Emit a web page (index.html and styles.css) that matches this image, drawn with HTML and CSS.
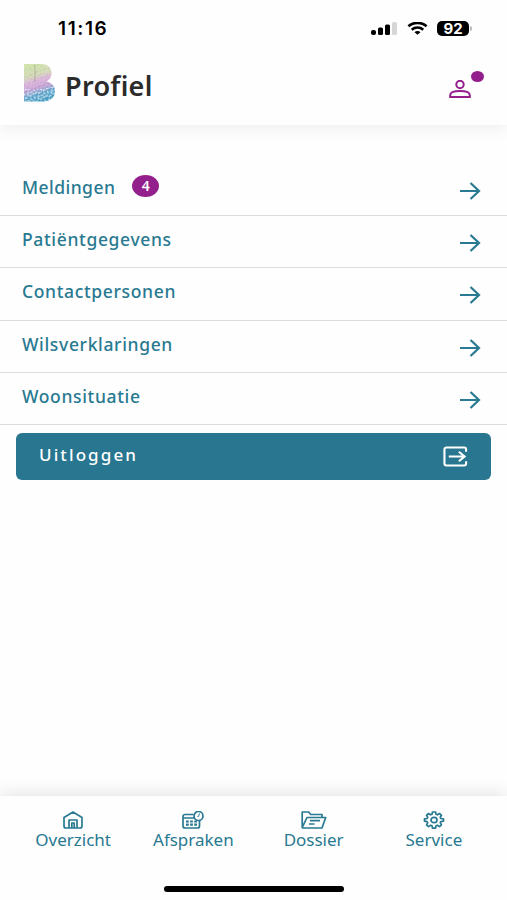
FILE: index.html
```html
<!DOCTYPE html>
<html lang="nl">
<head>
  <meta charset="UTF-8">
  <meta name="viewport" content="width=device-width, initial-scale=1">
  <title>Profiel</title>
  <link rel="stylesheet" href="styles.css">
</head>
<body>
  <div class="statusbar">
    <span class="tijd">11:16</span>
    <div class="status-iconen">
      <svg width="26" height="14" viewBox="0 0 26 14">
        <rect x="0" y="9" width="5" height="5" rx="2"/>
        <rect x="7" y="6.5" width="5" height="7.5" rx="1.5"/>
        <rect x="14" y="3.5" width="5" height="10.5" rx="1.5"/>
        <rect x="21" y="1" width="5" height="13" rx="1.5" fill="#d6d6d6"/>
      </svg>
      <svg class="wifi" width="21" height="13" viewBox="0 0 22 14">
        <path d="M1.2 4.6C6.5-.3 15.5-.3 20.8 4.6M4.8 8.3c3.5-3.1 8.900-3.1 12.400 0" fill="none" stroke="#000" stroke-width="2.800"/>
        <path d="M11 13.700 7.800 11c1.700-1.600 4.700-1.600 6.400 0z"/>
      </svg>
      <div class="batterij">92</div>
      <span class="batterij-punt"></span>
    </div>
  </div>

  <header class="kop">
    <svg class="logo" width="32" height="38" viewBox="0 0 32 38">
      <defs>
        <linearGradient id="verloop" x1=".2" y1="0" x2=".45" y2="1">
          <stop offset="0" stop-color="#cfe3a6"/>
          <stop offset=".3" stop-color="#d3d9b4"/>
          <stop offset=".46" stop-color="#dbb3d9"/>
          <stop offset=".64" stop-color="#c8a2d4"/>
          <stop offset=".8" stop-color="#68a8ce"/>
          <stop offset="1" stop-color="#459fc2"/>
        </linearGradient>
        <pattern id="stippen" width="11" height="9" patternUnits="userSpaceOnUse" patternTransform="rotate(17)">
          <path d="M1 1l1.500 1M5 .8l-1 1.500M8.500 1.500l1 1M2 4.500l-1.500 1M5.500 4l1.500.5M9.500 5.500l-1 1M3.500 7l1.500-.5M6.500 8l1-1M1 8l.8.6" stroke="#fff" stroke-width="1.200" stroke-linecap="round"/>
          <path d="M3.500 3l.7.300M7 2.700l.5-.6M7.300 6l.4.500M2.500 6l.4-.6M10 8l.4-.5" stroke="#2878b4" stroke-width=".9" stroke-linecap="round"/>
        </pattern>
        <clipPath id="letter">
          <path d="M0 0h17c7 0 10.500 4 10.500 9 0 4-2 7-5 8.500 5 1 8.500 4.500 8.500 9.500C31 33.500 26 37.500 19 37.500H0z"/>
        </clipPath>
      </defs>
      <g clip-path="url(#letter)">
        <rect width="32" height="38" fill="url(#verloop)"/>
        <rect width="32" height="26" fill="url(#stippen)" opacity=".22"/>
        <path d="M0 24c8 4 22 0 32-2v16H0z" fill="url(#stippen)" opacity=".8"/>
        <path d="M11 1v17" stroke="#8f9a80" stroke-width=".8" opacity=".7"/>
        <path d="M11 9 6 4M11 9l5-5M11 14l-6-4M11 14l7-4" fill="none" stroke="#9eaa89" stroke-width=".6" opacity=".3"/>
      </g>
    </svg>
    <h1>Profiel</h1>
    <div class="gebruiker">
      <svg width="22" height="18" viewBox="0 0 22 18" fill="none" stroke="#931f8d" stroke-width="2">
        <circle cx="11" cy="4.500" r="3.700"/>
        <path d="M1.200 17v-1.800C1.200 12.300 6 11 11 11s9.800 1.300 9.800 4.200V17z"/>
      </svg>
      <span class="stip"></span>
    </div>
  </header>

  <main>
    <ul class="menu">
      <li>
        <span class="label">Meldingen</span><span class="badge">4</span>
        <svg class="pijl" width="22" height="18" viewBox="0 0 22 18"><path d="M1 9h19M11.500 1l8.500 8-8.500 8"/></svg>
      </li>
      <li>
        <span class="label breed">Patiëntgegevens</span>
        <svg class="pijl" width="22" height="18" viewBox="0 0 22 18"><path d="M1 9h19M11.500 1l8.500 8-8.500 8"/></svg>
      </li>
      <li>
        <span class="label breed">Contactpersonen</span>
        <svg class="pijl" width="22" height="18" viewBox="0 0 22 18"><path d="M1 9h19M11.500 1l8.500 8-8.500 8"/></svg>
      </li>
      <li>
        <span class="label breed">Wilsverklaringen</span>
        <svg class="pijl" width="22" height="18" viewBox="0 0 22 18"><path d="M1 9h19M11.500 1l8.500 8-8.500 8"/></svg>
      </li>
      <li>
        <span class="label breed">Woonsituatie</span>
        <svg class="pijl" width="22" height="18" viewBox="0 0 22 18"><path d="M1 9h19M11.500 1l8.500 8-8.500 8"/></svg>
      </li>
    </ul>
    <button class="uitloggen" type="button">
      <span>Uitloggen</span>
      <svg width="25" height="21" viewBox="0 0 26 21" fill="none" stroke="#fff" stroke-width="2.200">
        <path d="M24 5.500V3.200a2 2 0 0 0-2-2H3.500a2 2 0 0 0-2 2v14.600a2 2 0 0 0 2 2H22a2 2 0 0 0 2-2v-2.300M6 10.500h16M16.500 5.500l6 5-6 5"/>
      </svg>
    </button>
  </main>

  <nav class="onderbalk">
    <a>
      <svg width="20" height="18" viewBox="0 0 20 18">
        <path d="M1 6.500 10 1l9 5.500v8.500a2 2 0 0 1-2 2H3a2 2 0 0 1-2-2zM6 17V9h8v8M8.800 17v-5h2.400v5"/>
      </svg>
      <span>Overzicht</span>
    </a>
    <a>
      <svg width="22" height="18" viewBox="0 0 22 18">
        <path d="M11.500 3.500H3a2 2 0 0 0-2 2V15a2 2 0 0 0 2 2h12.500a2 2 0 0 0 2-2v-5M1 7h11"/>
        <circle cx="16.500" cy="5" r="4.500"/>
        <path d="M16.500 5.500 17.500 2.500M15.500 5.500h1" stroke-width="1"/>
        <path d="M4 10.500h11M4 13.700h11" stroke-width="2.200" stroke-dasharray="2.800 1.300"/>
      </svg>
      <span>Afspraken</span>
    </a>
    <a>
      <svg width="26" height="18" viewBox="0 0 26 18">
        <path d="M1.200 16.500V1h6.500l2 2.500H21v3M1.200 16.500 6 6.500h18.700L21 17H2zM9 9.700h10M8 13h5.500"/>
      </svg>
      <span>Dossier</span>
    </a>
    <a>
      <svg width="22" height="18" viewBox="0 0 22 18">
        <path d="M9.500 1h3l.5 2.200 1.500.6L16.500 2.500l2 1.800-1.200 2 .6 1.200 2.600.3v2.400l-2.600.4-.6 1.300 1.200 2-2 1.700-2-1.300-1.500.6-.5 2.200h-3L9 14.900l-1.500-.6-2 1.300-2-1.700 1.200-2-.6-1.300-2.600-.4V7.800l2.600-.3.600-1.200-1.200-2 2-1.800 2 1.300L9 3.200z"/>
        <ellipse cx="11" cy="9" rx="3" ry="2.700"/>
      </svg>
      <span>Service</span>
    </a>
  </nav>
  <div class="home-streep"></div>
</body>
</html>
```
FILE: styles.css
```css
* {
  box-sizing: border-box;
}

body {
  margin: 0;
  height: 900px;
  display: flex;
  flex-direction: column;
  overflow: hidden;
  background: #fefefe;
  font-family: "Noto Sans", sans-serif;
  color: #287991;
}

svg {
  display: block;
  flex-shrink: 0;
}

.statusbar {
  height: 56px;
  padding: 0 35px 0 58px;
  display: flex;
  align-items: center;
  justify-content: space-between;
  color: #000;
  font-family: Inter, sans-serif;
}

.tijd {
  font-size: 19px;
  font-weight: 600;
  letter-spacing: 1.6px;
}

.status-iconen {
  display: flex;
  align-items: center;
}

.wifi {
  margin: 0 9px 0 10px;
}

.batterij {
  width: 32px;
  height: 15px;
  border-radius: 5px;
  background: #000;
  color: #fff;
  font-size: 15px;
  font-weight: 700;
  line-height: 15px;
  text-align: center;
}

.batterij-punt {
  width: 2px;
  height: 5px;
  margin-left: 1px;
  border-radius: 0 2px 2px 0;
  background: #bbb;
}

.kop {
  height: 69px;
  padding: 0 22px 0 24px;
  display: flex;
  align-items: flex-start;
  box-shadow: 0 3px 16px rgba(0, 0, 0, 0.07);
  clip-path: inset(0 0 -24px 0);
}

.logo {
  margin-top: 8px;
}

h1 {
  margin: 12px 0 0 9px;
  color: #2b2b2b;
  font-size: 27px;
  font-weight: 600;
  line-height: 36px;
  letter-spacing: 0.3px;
}

.gebruiker {
  position: relative;
  margin: 24px 14px 0 auto;
}

.stip {
  position: absolute;
  top: -9px;
  right: -13px;
  width: 13px;
  height: 11px;
  border-radius: 50%;
  background: #931f8d;
}

main {
  flex: 1;
  padding-top: 39px;
}

.menu {
  list-style: none;
  margin: 0;
  padding: 0;
}

.menu li {
  height: 52.2px;
  padding: 0 26px 0 22px;
  display: flex;
  align-items: flex-start;
  border-bottom: 1px solid #dcdddd;
}

.label {
  margin-top: 11px;
  font-size: 17.5px;
  font-weight: 500;
  line-height: 24px;
  letter-spacing: 0.45px;
}

.label.breed {
  letter-spacing: 0.65px;
}

.badge {
  width: 27px;
  height: 22px;
  margin: 11px 0 0 17px;
  border-radius: 50%;
  background: #931f8d;
  color: #fff;
  font-size: 14px;
  font-weight: 600;
  line-height: 21px;
  text-align: center;
}

.pijl {
  margin: 18px 0 0 auto;
  fill: none;
  stroke: #287991;
  stroke-width: 2.2;
}

.uitloggen {
  width: 475px;
  height: 47px;
  margin: 8px 0 0 16px;
  padding: 0 23px;
  display: flex;
  align-items: center;
  justify-content: space-between;
  border: none;
  border-radius: 6px;
  background: #28768f;
  color: #fff;
  font-family: inherit;
  font-size: 17px;
  font-weight: 500;
  letter-spacing: 2.1px;
}

.uitloggen span {
  margin-bottom: 3px;
}

.onderbalk {
  height: 104px;
  padding: 15px 13px 0;
  display: grid;
  grid-template-columns: repeat(4, 1fr);
  background: #fefefe;
  box-shadow: 0 -3px 16px rgba(0, 0, 0, 0.1);
}

.onderbalk a {
  display: flex;
  flex-direction: column;
  align-items: center;
  font-size: 17px;
  line-height: 22px;
}

.onderbalk svg {
  fill: none;
  stroke: #287991;
  stroke-width: 1.7;
  stroke-linejoin: round;
}

.home-streep {
  position: absolute;
  left: 164px;
  top: 886px;
  width: 180px;
  height: 6px;
  border-radius: 3px;
  background: #000;
}
```
